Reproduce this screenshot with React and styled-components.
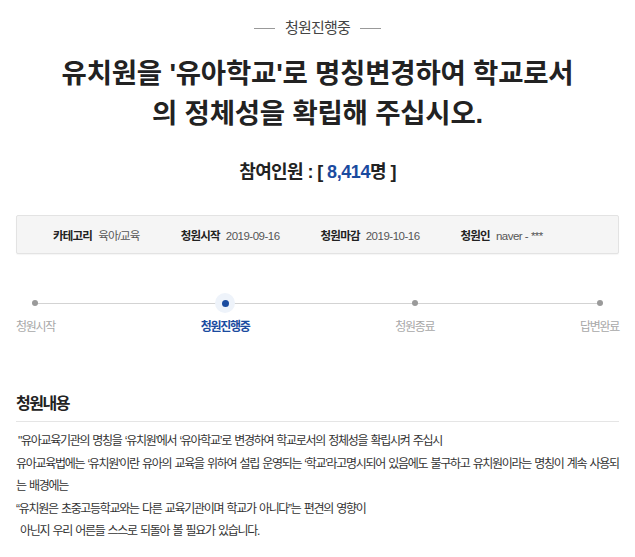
import React from 'react';
import styled, { createGlobalStyle } from 'styled-components';

const KR = `"Liberation Sans", "Noto Sans CJK KR", sans-serif`;

const Global = createGlobalStyle`
  html, body { margin: 0; padding: 0; background: #fff; }
  body { font-family: ${KR}; color: #333; }
  * { box-sizing: border-box; }
`;

const Page = styled.div`
  width: 635px;
  padding: 0 16px 20px;
`;

const StatusRow = styled.div`
  display: flex;
  justify-content: center;
  align-items: center;
  gap: 10px;
  margin-top: 18px;
  height: 20px;
  font: 400 15px/20px ${KR};
  letter-spacing: -0.8px;
  color: #444;
`;

const Dash = styled.span`
  width: 21px;
  height: 1px;
  background: #999;
`;

const Title = styled.h1`
  margin: 16px 0 0;
  text-align: center;
  font: 700 27.5px/40px ${KR};
  letter-spacing: -0.2px;
  color: #222;
`;

const Count = styled.div`
  margin-top: 26px;
  text-align: center;
  font: 700 18px/24px ${KR};
  letter-spacing: -0.6px;
  color: #222;
`;

const Num = styled.span`
  color: #1a4b9f;
  letter-spacing: -0.4px;
`;

const InfoBox = styled.div`
  margin-top: 31px;
  height: 39px;
  background: #f5f5f5;
  border: 1px solid #e3e3e3;
  border-radius: 2px;
  box-shadow: 0 1px 1px rgba(0, 0, 0, 0.04);
  display: flex;
  align-items: center;
  gap: 41px;
  padding-left: 36px;
`;

const InfoItem = styled.div`
  display: flex;
  align-items: baseline;
  gap: 6px;
  font-size: 11.5px;
  letter-spacing: -0.8px;
`;

const InfoLabel = styled.span`
  font-weight: 700;
  color: #222;
`;

const InfoValue = styled.span`
  color: #555;
  letter-spacing: ${p => (p.$latin ? '-0.5px' : '-0.8px')};
`;

const Steps = styled.div`
  position: relative;
  margin-top: 39px;
  display: flex;
  justify-content: space-between;
  &::before {
    content: '';
    position: absolute;
    top: 10px;
    left: 19px;
    right: 20px;
    height: 1px;
    background: #d3d3d3;
  }
`;

const Step = styled.div`
  position: relative;
  z-index: 1;
  display: flex;
  flex-direction: column;
  align-items: center;
  gap: 6px;
`;

const DotWrap = styled.div`
  width: 20px;
  height: 20px;
  display: flex;
  align-items: center;
  justify-content: center;
  border-radius: 50%;
  background: ${p => (p.$active ? '#eef3fa' : 'transparent')};
`;

const Dot = styled.span`
  width: ${p => (p.$active ? '7px' : '6px')};
  height: ${p => (p.$active ? '7px' : '6px')};
  border-radius: 50%;
  background: ${p => (p.$active ? '#1a4b9f' : '#9a9a9a')};
`;

const StepLabel = styled.span`
  font: ${p => (p.$active ? 700 : 400)} 12px/16px ${KR};
  letter-spacing: -1.3px;
  color: ${p => (p.$active ? '#1a4b9f' : '#a8a8a8')};
  white-space: nowrap;
`;

const SectionTitle = styled.h2`
  margin: 58px 0 0;
  padding-bottom: 6px;
  border-bottom: 1px solid #e5e5e5;
  font: 700 16px/22px ${KR};
  letter-spacing: -1.5px;
  color: #222;
`;

const Body = styled.div`
  margin-top: 8px;
  font: 400 12px/22.5px ${KR};
  letter-spacing: -1.3px;
  word-spacing: 1.2px;
  color: #333;
`;

const Line = styled.p`
  margin: 0;
  padding-left: ${p => p.$indent || 0}px;
`;

const steps = [
  { label: '청원시작' },
  { label: '청원진행중', active: true },
  { label: '청원종료' },
  { label: '답변완료' },
];

export default function App() {
  return (
    <>
      <Global />
      <Page>
        <StatusRow>
          <Dash />
          청원진행중
          <Dash />
        </StatusRow>
        <Title>
          유치원을 '유아학교'로 명칭변경하여 학교로서
          <br />
          의 정체성을 확립해 주십시오.
        </Title>
        <Count>
          참여인원 : [ <Num>8,414</Num>명 ]
        </Count>
        <InfoBox>
          <InfoItem>
            <InfoLabel>카테고리</InfoLabel>
            <InfoValue>육아/교육</InfoValue>
          </InfoItem>
          <InfoItem>
            <InfoLabel>청원시작</InfoLabel>
            <InfoValue $latin>2019-09-16</InfoValue>
          </InfoItem>
          <InfoItem>
            <InfoLabel>청원마감</InfoLabel>
            <InfoValue $latin>2019-10-16</InfoValue>
          </InfoItem>
          <InfoItem>
            <InfoLabel>청원인</InfoLabel>
            <InfoValue $latin>naver - ***</InfoValue>
          </InfoItem>
        </InfoBox>
        <Steps>
          {steps.map(s => (
            <Step key={s.label}>
              <DotWrap $active={s.active}>
                <Dot $active={s.active} />
              </DotWrap>
              <StepLabel $active={s.active}>{s.label}</StepLabel>
            </Step>
          ))}
        </Steps>
        <SectionTitle>청원내용</SectionTitle>
        <Body>
          <Line $indent={2}>"유아교육기관의 명칭을 ‘유치원’에서 ‘유아학교’로 변경하여 학교로서의 정체성을 확립시켜 주십시</Line>
          <Line>유아교육법에는 ‘유치원’이란 유아의 교육을 위하여 설립 운영되는 ‘학교’라고명시되어 있음에도 불구하고 유치원이라는 명칭이 계속 사용되는 배경에는</Line>
          <Line>“유치원은 초중고등학교와는 다른 교육기관이며 학교가 아니다”는 편견의 영향이</Line>
          <Line $indent={4}>아닌지 우리 어른들 스스로 되돌아 볼 필요가 있습니다.</Line>
        </Body>
      </Page>
    </>
  );
}
